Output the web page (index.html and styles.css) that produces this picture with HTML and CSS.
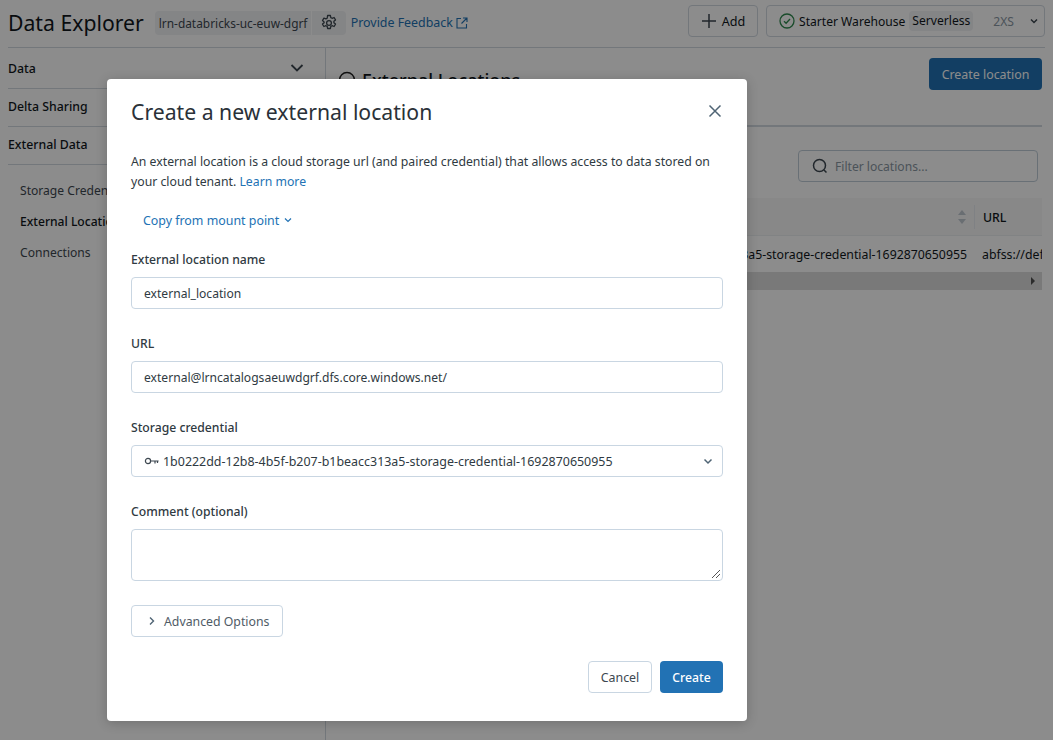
FILE: index.html
```html
<!doctype html>
<html lang="en">
	<head>
		<meta charset="UTF-8">
		<title>Data Explorer</title>
		<link rel="stylesheet" href="styles.css">
	</head>
	<body>
		<div class="page">
			<header class="topbar">
				<h1 class="app-title">Data Explorer</h1>
				<span class="metastore">lrn-databricks-uc-euw-dgrf</span>
				<span class="gear-box">
					<svg width="18" height="18" viewBox="0 0 18 18" fill="none" stroke="#3d4750" stroke-width="1.3"><path d="M7.6 1.5h2.8l.4 2.1 1.3.7 2-.8 1.4 2.4-1.6 1.4v1.4l1.6 1.4-1.4 2.4-2-.8-1.3.7-.4 2.1H7.6l-.4-2.1-1.3-.7-2 .8-1.4-2.4 1.6-1.4V7.9L2.5 6.5l1.4-2.4 2 .8 1.3-.7z" stroke-linejoin="round"/><circle cx="9" cy="9" r="2.4"/></svg>
				</span>
				<a class="feedback">Provide Feedback<svg width="12" height="12" viewBox="0 0 12 12" fill="none" stroke="#2272b4" stroke-width="1.1"><path d="M5 1.5H1v9.500h9.500V7M7 1h4v4M11 1 5.500 6.500"/></svg></a>
				<div class="topbar-right">
					<button class="btn-add"><svg width="16" height="16" viewBox="0 0 16 16" stroke="#3d4750" stroke-width="1.500"><path d="M8 1v14M1 8h14"/></svg>Add</button>
					<div class="warehouse">
						<svg width="16" height="16" viewBox="0 0 16 16" fill="none" stroke="#2f8a4f" stroke-width="1.300"><circle cx="8" cy="8" r="7"/><path d="m5 8.200 2.100 2.100L11 6"/></svg>
						<span class="wh-name">Starter Warehouse</span>
						<span class="wh-tag">Serverless</span>
						<span class="wh-size">2XS</span>
						<svg class="wh-caret" width="10" height="10" viewBox="0 0 10 10" fill="none" stroke="#3d4750" stroke-width="1.500"><path d="m2 3.500 3 3 3-3"/></svg>
					</div>
				</div>
			</header>
			<div class="content">
				<aside class="sidebar">
					<div class="side-head">Data
						<svg width="14" height="14" viewBox="0 0 14 14" fill="none" stroke="#3d4750" stroke-width="1.800"><path d="m1.500 4 5.500 5.500L12.500 4"/></svg>
					</div>
					<div class="side-head">Delta Sharing</div>
					<div class="side-head">External Data</div>
					<ul class="side-list">
						<li>Storage Credentials</li>
						<li class="current">External Locations</li>
						<li>Connections</li>
					</ul>
				</aside>
				<main class="main">
					<div class="main-head">
						<h2 class="main-title">
							<svg width="18" height="18" viewBox="0 0 18 18" fill="none" stroke="#222" stroke-width="1.400"><path d="M1.500 16V9a7.500 7.500 0 0 1 15 0v7z"/></svg>
							External Locations
						</h2>
						<button class="btn-location">Create location</button>
					</div>
					<div class="filter-row">
						<div class="filter">
							<svg width="16" height="16" viewBox="0 0 16 16" fill="none" stroke="#3d4750" stroke-width="1.500"><circle cx="7.500" cy="7.500" r="6"/><path d="m12 12 2.500 2.500"/></svg>
							Filter locations...
						</div>
					</div>
					<div class="table">
						<div class="table-head">
							<span class="sort-arrows"></span>
							<span class="col-url">URL</span>
						</div>
						<div class="table-row">
							<span class="col-cred">1b0222dd-12b8-4b5f-b207-b1beacc313a5-storage-credential-1692870650955</span>
							<span class="col-url">abfss://def</span>
						</div>
						<div class="table-scroll"><span class="scroll-arrow"></span></div>
					</div>
				</main>
			</div>
		</div>

		<div class="overlay">
			<div class="dialog">
				<div class="dialog-head">
					<h3 class="dialog-title">Create a new external location</h3>
					<svg class="dialog-close" width="14" height="14" viewBox="0 0 14 14" stroke="#4f6474" stroke-width="1.500"><path d="m1.500 1.500 11 11M12.500 1.500l-11 11"/></svg>
				</div>
				<p class="intro">An external location is a cloud storage url (and paired credential) that allows access to data stored on your cloud tenant. <a class="link">Learn more</a></p>
				<a class="copy-link">Copy from mount point
					<svg width="8" height="8" viewBox="0 0 8 8" fill="none" stroke="#2272b4" stroke-width="1.200"><path d="m1 2.500 3 3 3-3"/></svg>
				</a>
				<label class="field-label">External location name</label>
				<div class="input">external_location</div>
				<label class="field-label">URL</label>
				<div class="input">external@lrncatalogsaeuwdgrf.dfs.core.windows.net/</div>
				<label class="field-label">Storage credential</label>
				<div class="input select">
					<svg width="16" height="10" viewBox="0 0 16 10" fill="none" stroke="#3d4750" stroke-width="1.200"><circle cx="4" cy="5" r="2.600"/><path d="M6.600 5h8M11 5v2.500M13.500 5v2"/></svg>
					<span class="select-text">1b0222dd-12b8-4b5f-b207-b1beacc313a5-storage-credential-1692870650955</span>
					<svg width="10" height="10" viewBox="0 0 10 10" fill="none" stroke="#4f6474" stroke-width="1.500"><path d="m1.500 3.500 3.500 3.500 3.500-3.500"/></svg>
				</div>
				<label class="field-label">Comment (optional)</label>
				<div class="input textarea">
					<svg class="grip" width="10" height="10" viewBox="0 0 10 10" stroke="#555" stroke-width="1"><path d="m1 9 8-8M5 9l4-4"/></svg>
				</div>
				<button class="btn-advanced">
					<svg width="8" height="10" viewBox="0 0 8 10" fill="none" stroke="#4f6474" stroke-width="1.400"><path d="m2 1.500 3.500 3.500L2 8.500"/></svg>
					Advanced Options
				</button>
				<div class="dialog-foot">
					<button class="btn-cancel">Cancel</button>
					<button class="btn-create">Create</button>
				</div>
			</div>
		</div>
	</body>
</html>
```

FILE: styles.css
```css
*{margin:0;padding:0;box-sizing:border-box;}
html,body{height:100%;overflow:hidden;}
body{
	background:#fff;
	color:#11171c;
	font-family:"Noto Sans","Open Sans",sans-serif;
	font-size:12.3px;
	position:relative;
}
button{font-family:inherit;font-size:12.4px;}

.page{padding:0 8px;height:740px;}
.topbar{
	height:48px;
	display:flex;
	align-items:center;
	border-bottom:1px solid #d1d9e1;
}
.app-title{font-size:21.2px;font-weight:400;line-height:32px;margin:-2px 11px 0 0;}
.metastore{
	height:24px;line-height:24px;
	width:156px;
	padding-left:4px;
	background:#f1f3f5;
	border-radius:4px 0 0 4px;
	font-size:11.9px;
	white-space:nowrap;
	color:#3d4750;
	margin:-2px 1px 0 0;
}
.gear-box{
	width:34px;height:24px;
	background:#f1f3f5;
	border-radius:0 4px 4px 0;
	display:flex;align-items:center;justify-content:center;
	margin:-2px 5px 0 0;
}
.feedback{color:#2272b4;display:flex;align-items:center;gap:3px;font-size:12.4px;margin-top:-2px;}
.topbar-right{margin-left:auto;display:flex;gap:8px;align-items:center;margin-top:-5px;}
.btn-add{
	width:70px;height:32px;
	background:#fff;
	border:1px solid #d1d9e1;
	border-radius:4px;
	color:#11171c;
	font-size:12.6px;
	display:flex;align-items:center;justify-content:center;gap:5px;
}
.warehouse{
	width:279px;height:32px;
	border:1px solid #d1d9e1;
	border-radius:4px;
	display:flex;align-items:center;
	padding:0 5px 0 12px;
	white-space:nowrap;
	font-size:12.1px;
}
.wh-name{margin-left:4px;}
.wh-tag{
	margin-left:4px;
	padding:0 3px;
	height:20px;line-height:20px;
	background:#f1f3f5;
	border-radius:4px;
}
.wh-size{margin-left:20px;color:#8a97a3;}
.wh-caret{margin-left:auto;}

.content{display:flex;height:692px;}
.sidebar{width:318px;border-right:1px solid #d1d9e1;flex:none;}
.side-head{
	height:38px;
	display:flex;align-items:center;justify-content:space-between;
	padding:0 21px 2px 0;
	border-bottom:1px solid #d1d9e1;
	font-size:12.3px;
	font-weight:500;
}
.side-head:first-child{height:41px;padding-bottom:0;}
.side-list{list-style:none;padding:10px 12px;}
.side-list li{height:31px;line-height:31px;font-size:12.1px;color:#3d4750;}
.side-list .current{font-weight:500;color:#11171c;}

.main{flex:1;padding:10px 3px 0 12px;min-width:0;}
.main-head{
	height:69px;
	display:flex;justify-content:space-between;align-items:flex-start;
	border-bottom:2px solid #d1d9e1;
}
.main-title{
	display:flex;align-items:center;gap:6px;
	font-size:18px;font-weight:500;
	margin-top:10px;
}
.btn-location{
	width:113px;height:32px;
	background:#2272b4;
	border:0;border-radius:4px;
	color:#fff;
}
.filter-row{display:flex;justify-content:flex-end;padding:23px 4px 16px 0;}
.filter{
	width:240px;height:32px;
	border:1px solid #c0cdd8;
	border-radius:4px;
	display:flex;align-items:center;gap:7px;
	padding-left:13px;
	color:#8a97a3;
	font-size:12.1px;
}
.table{font-size:12.3px;}
.table-head{
	height:38px;
	background:#f7f7f8;
	border-bottom:1px solid #eceef0;
	display:flex;align-items:center;justify-content:flex-end;
}
.sort-arrows{
	width:8px;height:14px;
	margin-right:8px;
	position:relative;
}
.sort-arrows::before,.sort-arrows::after{
	content:"";
	position:absolute;left:0;
	border-left:4px solid transparent;
	border-right:4px solid transparent;
}
.sort-arrows::before{top:0;border-bottom:5px solid #c0c8d0;}
.sort-arrows::after{bottom:0;border-top:5px solid #c0c8d0;}
.table-head .col-url{
	width:68px;
	border-left:1px solid #e8ecf0;
	padding:2px 0 0 8px;
	line-height:22px;
	font-weight:500;
}
.table-row{
	height:36px;
	display:flex;align-items:center;justify-content:flex-end;
	white-space:nowrap;
	overflow:hidden;
}
.table-row .col-url{width:68px;padding-left:8px;flex:none;}
.col-cred{flex:none;margin-right:7px;}
.table-scroll{
	height:18px;
	background:#dcdcdc;
	display:flex;align-items:center;justify-content:flex-end;
	padding-right:7px;
}
.scroll-arrow{
	border-top:4px solid transparent;
	border-bottom:4px solid transparent;
	border-left:4px solid #505050;
}

/* modal, sits over the page */
.overlay{
	position:absolute;
	top:0;left:0;right:0;bottom:0;
	background:rgba(0,0,0,.45);
}
.dialog{
	width:640px;height:642px;
	margin:79px 0 0 107px;
	padding:16px 24px 0;
	background:#fff;
	border-radius:4px;
	box-shadow:0 2px 12px rgba(0,0,0,.2);
	display:flex;flex-direction:column;
	align-items:flex-start;
}
.dialog-head{
	width:100%;
	display:flex;justify-content:space-between;align-items:center;
	height:32px;
	margin-bottom:25px;
}
.dialog-title{font-size:21.2px;font-weight:400;color:#2a3138;}
.dialog-close{margin-right:1px;}
.intro{line-height:20px;color:#2f3a42;font-size:12.25px;margin-bottom:17px;}
.link{color:#2272b4;}
.copy-link{
	color:#2272b4;
	font-size:12.4px;
	margin-left:12px;
	display:flex;align-items:center;gap:5px;
	height:22px;
	margin-bottom:19px;
}
.field-label{
	font-weight:500;
	font-size:12.2px;
	line-height:20px;
	height:20px;
	color:#2f3a42;
	margin-bottom:7px;
}
.input{
	width:100%;height:32px;
	border:1px solid #c9d6e2;
	border-radius:4px;
	padding:0 12px;
	display:flex;align-items:center;
	color:#2f3a42;
	font-size:12.1px;
	margin-bottom:25px;
	flex:none;
}
.select{justify-content:flex-start;}
.select-text{margin-left:3px;font-size:12.45px;}
.select svg:last-child{margin-left:auto;margin-right:-3px;}
.textarea{height:52px;position:relative;margin-bottom:24px;}
.grip{position:absolute;right:1px;bottom:1px;}
.btn-advanced{
	width:152px;height:32px;
	background:#fff;
	border:1px solid #c9d6e2;
	border-radius:4px;
	color:#4f5b66;
	font-size:12.3px;
	display:flex;align-items:center;gap:8px;
	padding-left:16px;
}
.dialog-foot{
	width:100%;
	display:flex;justify-content:flex-end;gap:8px;
	margin-top:24px;
}
.btn-cancel{
	width:64px;height:32px;
	background:#fff;
	border:1px solid #c9d6e2;
	border-radius:4px;
	color:#3d4750;
}
.btn-create{
	width:63px;height:32px;
	background:#2272b4;
	border:0;border-radius:4px;
	color:#fff;
	font-size:12.2px;
	font-weight:500;
}
```
